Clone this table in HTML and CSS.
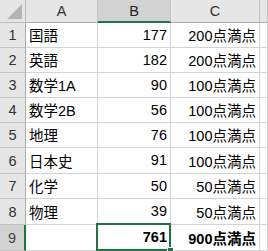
FILE: index.html
```html
<!DOCTYPE html>
<html lang="ja">
<head>
    <meta charset="UTF-8">
    <title>点数表</title>
    <link rel="stylesheet" href="styles.css">
</head>
<body>

<div class="sheet">
    <div class="corner"><span class="tri"></span></div>
    <div class="colhead">A</div>
    <div class="colhead active">B</div>
    <div class="colhead">C</div>
    <div class="colhead"></div>

    <div class="rowhead">1</div><div class="cell">国語</div><div class="cell num">177</div><div class="cell num">200点満点</div><div class="cell"></div>
    <div class="rowhead">2</div><div class="cell">英語</div><div class="cell num">182</div><div class="cell num">200点満点</div><div class="cell"></div>
    <div class="rowhead">3</div><div class="cell">数学1A</div><div class="cell num">90</div><div class="cell num">100点満点</div><div class="cell"></div>
    <div class="rowhead">4</div><div class="cell">数学2B</div><div class="cell num">56</div><div class="cell num">100点満点</div><div class="cell"></div>
    <div class="rowhead">5</div><div class="cell">地理</div><div class="cell num">76</div><div class="cell num">100点満点</div><div class="cell"></div>
    <div class="rowhead">6</div><div class="cell">日本史</div><div class="cell num">91</div><div class="cell num">100点満点</div><div class="cell"></div>
    <div class="rowhead">7</div><div class="cell">化学</div><div class="cell num">50</div><div class="cell num">50点満点</div><div class="cell"></div>
    <div class="rowhead">8</div><div class="cell">物理</div><div class="cell num">39</div><div class="cell num">50点満点</div><div class="cell"></div>
    <div class="rowhead active">9</div><div class="cell"></div><div class="cell num bold selected">761</div><div class="cell num bold">900点満点</div><div class="cell"></div>
</div>

</body>
</html>
```

FILE: styles.css
```css
body {
    margin: 0;
    background: #fff;
    font-family: "Liberation Sans", "Noto Sans CJK JP", sans-serif;
    font-size: 14.5px;
    color: #000;
    overflow: hidden;
}
.sheet {
    display: grid;
    width: 268px;
    overflow: hidden;
    grid-template-columns: 26px 72px 73px 89px 1fr;
    grid-template-rows: 23px 25px 25px 25px 25px 25px 26px 25px 26px 26px;
}
.corner {
    position: relative;
    background: #e6e6e6;
    border-right: 1px solid #bcbcbc;
    border-bottom: 1px solid #bcbcbc;
}
.corner .tri {
    position: absolute;
    right: 3px;
    bottom: 3px;
    width: 0;
    height: 0;
    border-left: 15px solid transparent;
    border-bottom: 15px solid #b5b5b5;
}
.colhead {
    display: flex;
    align-items: center;
    justify-content: center;
    background: #e6e6e6;
    border-right: 1px solid #c4c4c4;
    border-bottom: 1px solid #acacac;
    color: #333;
    font-size: 14.5px;
}
.colhead.active {
    background: #d2d2d2;
    border-bottom: 2px solid #217346;
    color: #222;
}
.rowhead {
    display: flex;
    align-items: center;
    justify-content: center;
    background: #e6e6e6;
    border-right: 1px solid #acacac;
    border-bottom: 1px solid #c4c4c4;
    color: #333;
    font-size: 14.5px;
}
.rowhead.active {
    background: #d2d2d2;
    border-right: 2px solid #217346;
    color: #444;
}
.cell {
    display: flex;
    align-items: center;
    padding: 0 3px 1px;
    border-right: 1px solid #d4d4d4;
    border-bottom: 1px solid #d4d4d4;
    white-space: nowrap;
}
.cell.num {
    justify-content: flex-end;
}
.cell.bold {
    font-weight: bold;
}
.cell.selected {
    position: relative;
}
/* active cell frame with the fill handle */
.cell.selected::before {
    content: "";
    position: absolute;
    left: -2px;
    top: -2px;
    right: -1px;
    bottom: -1px;
    border: 2px solid #217346;
}
.cell.selected::after {
    content: "";
    position: absolute;
    right: -4px;
    bottom: -4px;
    width: 5px;
    height: 5px;
    background: #217346;
    border: 1px solid #fff;
}
```
